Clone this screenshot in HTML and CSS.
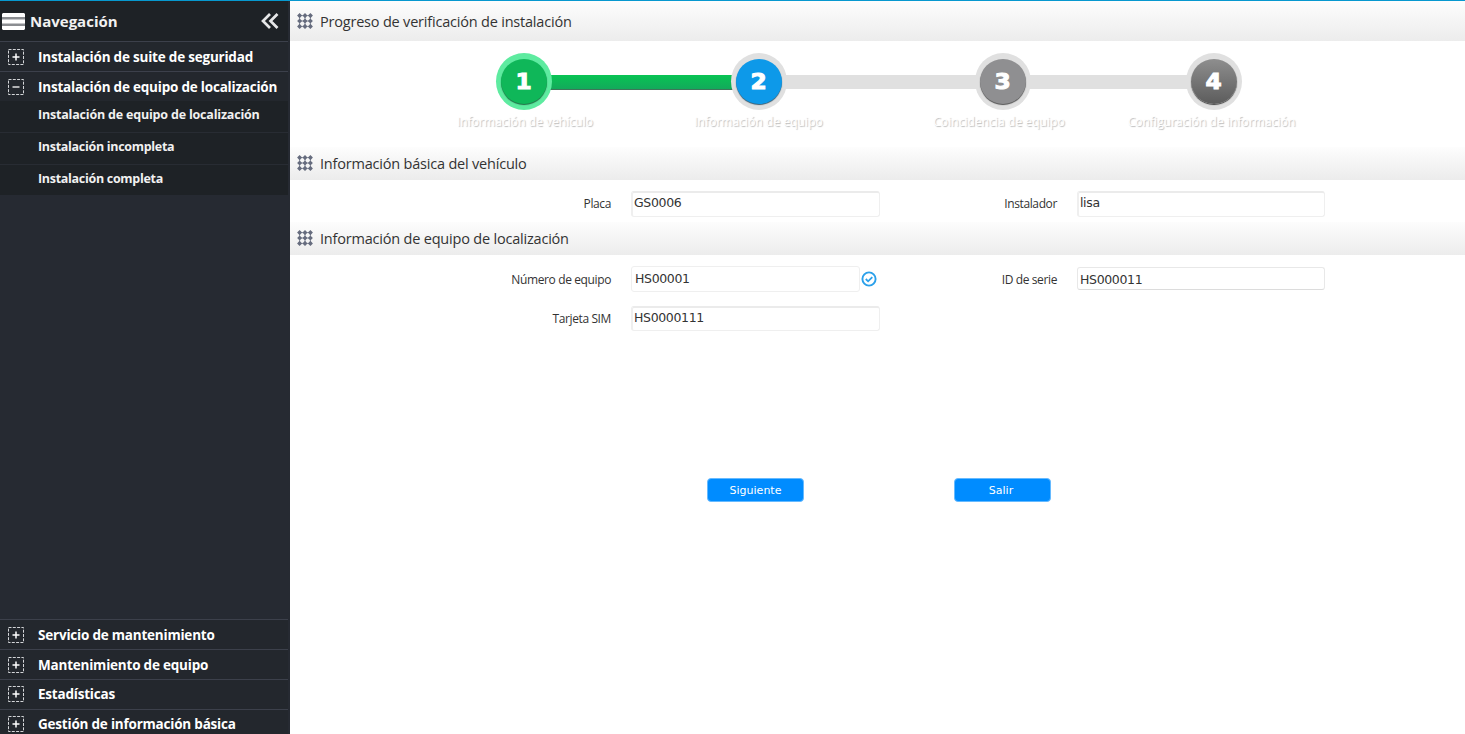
FILE: index.html
```html
<!DOCTYPE html>
<html lang="es">
<head>
<meta charset="utf-8">
<title>Instalación de equipo de localización</title>
<link rel="stylesheet" href="styles.css">
</head>
<body>
<svg width="0" height="0" class="defs">
  <symbol id="plus" viewBox="0 0 16 16"><rect x=".5" y=".5" width="15" height="15" fill="none" stroke="#d4d6d9" stroke-dasharray="3 1.3"/><path d="M4.500 8h7M8 4.500v7" stroke="#fff" stroke-width="1.500"/></symbol>
  <symbol id="minus" viewBox="0 0 16 16"><rect x=".5" y=".5" width="15" height="15" fill="none" stroke="#d4d6d9" stroke-dasharray="3 1.3"/><path d="M4.500 8h7" stroke="#fff" stroke-width="1.300"/></symbol>
  <symbol id="grid" viewBox="0 0 16 16"><path d="M1 2.600h14M1 8h14M1 13.400h14M2.600 1v14M8 1v14M13.400 1v14" stroke="#8d92a0" stroke-width="1"/><path fill="#666c7e" d="M2.600 0l2.500 2.600-2.500 2.600L.1 2.600zM8 0l2.500 2.600L8 5.200 5.500 2.600zM13.400 0l2.500 2.600-2.500 2.600-2.500-2.600zM2.600 5.400 5.100 8l-2.500 2.600L.1 8zM8 5.400 10.500 8 8 10.600 5.500 8zM13.400 5.400 15.900 8l-2.500 2.600L10.900 8zM2.600 10.800l2.500 2.600L2.600 16 .1 13.400zM8 10.800l2.500 2.600L8 16l-2.500-2.600zM13.400 10.800l2.500 2.600-2.500 2.600-2.500-2.600z"/></symbol>
</svg>
<div class="app">
  <aside class="sidebar">
    <header class="nav-head">
      <svg class="burger" width="23" height="17" viewBox="0 0 23 17"><path fill="#8b8d91" d="M0 4h23v9H0z"/><path fill="#fff" d="M1 0h21l1 1v3H0V1zM0 6.500h23v4H0zM0 13h23v3l-1 1H1l-1-1z"/></svg>
      <span class="nav-title">Navegación</span>
      <svg class="collapse" width="18" height="16" viewBox="0 0 18 16" fill="none" stroke="#e6e7e8" stroke-width="2.700"><path d="M9 1 2 8l7 7M16.500 1l-7 7 7 7"/></svg>
    </header>
    <nav class="menu">
      <div class="item"><svg><use href="#plus"/></svg><span>Instalación de suite de seguridad</span></div>
      <div class="item"><svg><use href="#minus"/></svg><span>Instalación de equipo de localización</span></div>
      <div class="submenu">
        <div class="sub active">Instalación de equipo de localización</div>
        <div class="sub">Instalación incompleta</div>
        <div class="sub">Instalación completa</div>
      </div>
    </nav>
    <nav class="menu bottom">
      <div class="item"><svg><use href="#plus"/></svg><span>Servicio de mantenimiento</span></div>
      <div class="item"><svg><use href="#plus"/></svg><span>Mantenimiento de equipo</span></div>
      <div class="item short"><svg><use href="#plus"/></svg><span>Estadísticas</span></div>
      <div class="item"><svg><use href="#plus"/></svg><span>Gestión de información básica</span></div>
    </nav>
  </aside>
  <main class="main">
    <h2 class="bar first"><svg><use href="#grid"/></svg><span>Progreso de verificación de instalación</span></h2>
    <div class="steps">
      <div class="step done"><div class="ring"><b><em>1</em></b></div><span>Información de vehículo</span></div>
      <i class="line green"></i>
      <div class="step current"><div class="ring"><b><em>2</em></b></div><span>Información de equipo</span></div>
      <i class="line line-b"></i>
      <div class="step next"><div class="ring"><b><em>3</em></b></div><span>Coincidencia de equipo</span></div>
      <i class="line line-c"></i>
      <div class="step last"><div class="ring"><b><em>4</em></b></div><span>Configuración de información</span></div>
    </div>
    <h2 class="bar"><svg><use href="#grid"/></svg><span>Información básica del vehículo</span></h2>
    <div class="form vehicle">
      <label>Placa</label><div class="field shade">GS0006</div>
      <label>Instalador</label><div class="field shade">lisa</div>
    </div>
    <h2 class="bar"><svg><use href="#grid"/></svg><span>Información de equipo de localización</span></h2>
    <div class="form device">
      <label>Número de equipo</label>
      <div class="checked"><div class="field">HS00001</div><svg width="16" height="16" viewBox="0 0 16 16" fill="none" stroke="#2ba0ea"><circle cx="8" cy="8" r="6.600" stroke-width="1.900"/><path d="m4.800 8 2.300 2.300 4.200-4.200" stroke-width="1.800"/></svg></div>
      <label>ID de serie</label><div class="field small">HS000011</div>
      <label>Tarjeta SIM</label><div class="field shade sim">HS0000111</div>
    </div>
    <div class="actions"><button>Siguiente</button><button class="exit">Salir</button></div>
  </main>
</div>
</body>
</html>
```
FILE: styles.css
```css
* { box-sizing: border-box; }
body { margin: 0; background: #fff; font-family: "Open Sans", "Noto Sans", sans-serif; }
.defs { display: block; position: absolute; }
.app { display: flex; height: 734px; border-top: 1px solid #0798cf; overflow: hidden; }

.sidebar { width: 290px; flex: none; background: #262a32; padding-right: 2px; display: flex; flex-direction: column; color: #fff; font-weight: 700; white-space: nowrap; }
.nav-head { height: 40px; flex: none; display: flex; align-items: center; background: #1e2226; padding: 1px 9px 0 2px; }
.nav-title { margin: -2px 0 0 5px; font-size: 15px; color: #f1f1f1; letter-spacing: 0; }
.collapse { margin: -2px 0 0 auto; }
.item { height: 30px; flex: none; display: flex; align-items: center; gap: 14px; padding-left: 8px; border-top: 1px solid #3c404b; background: #23272d; font-size: 13.500px; letter-spacing: -.21px; }
.item svg { width: 16px; height: 16px; }
.item.short { height: 29.500px; }
.submenu { background: #1e2226; height: 94px; }
.sub { height: 32px; padding: 4px 0 0 38px; line-height: 19px; font-size: 12.500px; letter-spacing: -.3px; color: #f1f1f1; border-bottom: 1px solid #282c33; }
.sub.active { letter-spacing: -.19px; }
.sub:last-child { border: 0; }
.bottom { margin-top: auto; height: 115px; }

.main { flex: 1; color: #333; }
.bar { margin: 0; height: 33px; display: flex; align-items: center; gap: 7px; padding-left: 7px; font-size: 14.500px; font-weight: 400; letter-spacing: -.2px; background: linear-gradient(#fdfdfd, #ececec); }
.bar svg { width: 16px; height: 16px; margin-top: -1px; }
.bar.first { height: 40px; }

.steps { height: 106px; display: flex; align-items: flex-start; padding: 12px 0 0 206px; }
.step { width: 56px; flex: none; display: flex; flex-direction: column; align-items: center; position: relative; }
.ring { width: 56px; height: 57px; border-radius: 50%; background: #e0e0e0; padding: 6px 5px; display: flex; }
.ring b { flex: 1; height: 45px; border-radius: 50%; display: flex; align-items: center; justify-content: center; color: #fff; font: 700 22px/45px "DejaVu Sans", sans-serif; }
.ring em { font-style: normal; padding-top: 1px; line-height: 44px; transform: scaleX(1.06); -webkit-text-stroke: 1px #fff; }
.step span { margin-top: 3px; font-size: 12px; letter-spacing: .06px; line-height: 18px; white-space: nowrap; color: #fff; text-shadow: 1px 1px 1px #bcbcbc; }
.done span { margin-left: 2px; }
.next span { margin-left: -8px; }
.last span { margin-left: -5px; }
.done .ring { background: #5eeba0; }
.done b { background: #0fb759; box-shadow: 0 1px 1px #226b45; }
.current b { background: #0d99e9; box-shadow: 0 1px 1px #345a70; }
.next b { background: #8f8f91; box-shadow: 0 1px 1px #505050; }
.last b { background: linear-gradient(#8e8e8e, #5c5c5c); box-shadow: 0 1px 1px #404040; }
.line { height: 14px; margin: 22px -3px 0; background: #e0e0e0; width: 194px; flex: none; }
.line.green { width: 184.500px; height: 15px; background: linear-gradient(#08c454, #13aa5b); border-bottom: 1px solid #3f7559; }
.line.line-b { width: 194.500px; }
.line.line-c { width: 161px; }

.form { display: grid; grid-template-columns: 321px 249px 157px 248px; grid-auto-rows: 26px; column-gap: 20px; }
.form label { display: flex; align-items: center; justify-content: flex-end; font-size: 12px; letter-spacing: -.38px; }
.vehicle { height: 42px; padding-top: 11px; }
.vehicle label { padding-bottom: 2px; }
.device { padding-top: 11px; height: 223px; row-gap: 13px; }
.field { border: 1px solid #efefef; border-radius: 3px; height: 26px; font: 12.500px/23px "DejaVu Sans", sans-serif; letter-spacing: -.35px; padding-left: 3px; white-space: nowrap; }
.shade { border-top: 2px solid #ebebeb; border-left-width: 2px; line-height: 20px; padding-left: 1px; }
.small { height: 23px; margin-top: 1px; padding-left: 2px; line-height: 23px; border-color: #e8e8e8; border-bottom-color: #dcdcdc; }
.sim { height: 25px; margin-top: 1px; }
.checked { display: flex; align-items: center; gap: 1px; }
.checked .field { width: 229px; }
.actions { display: flex; gap: 150px; padding-left: 417px; }
.actions button { width: 97px; height: 24px; border: 1px solid #66baff; border-radius: 4px; background: #008cff; color: #fff; font: 11px "DejaVu Sans", sans-serif; padding: 0; }
.actions .exit { padding-right: 3px; }
```
